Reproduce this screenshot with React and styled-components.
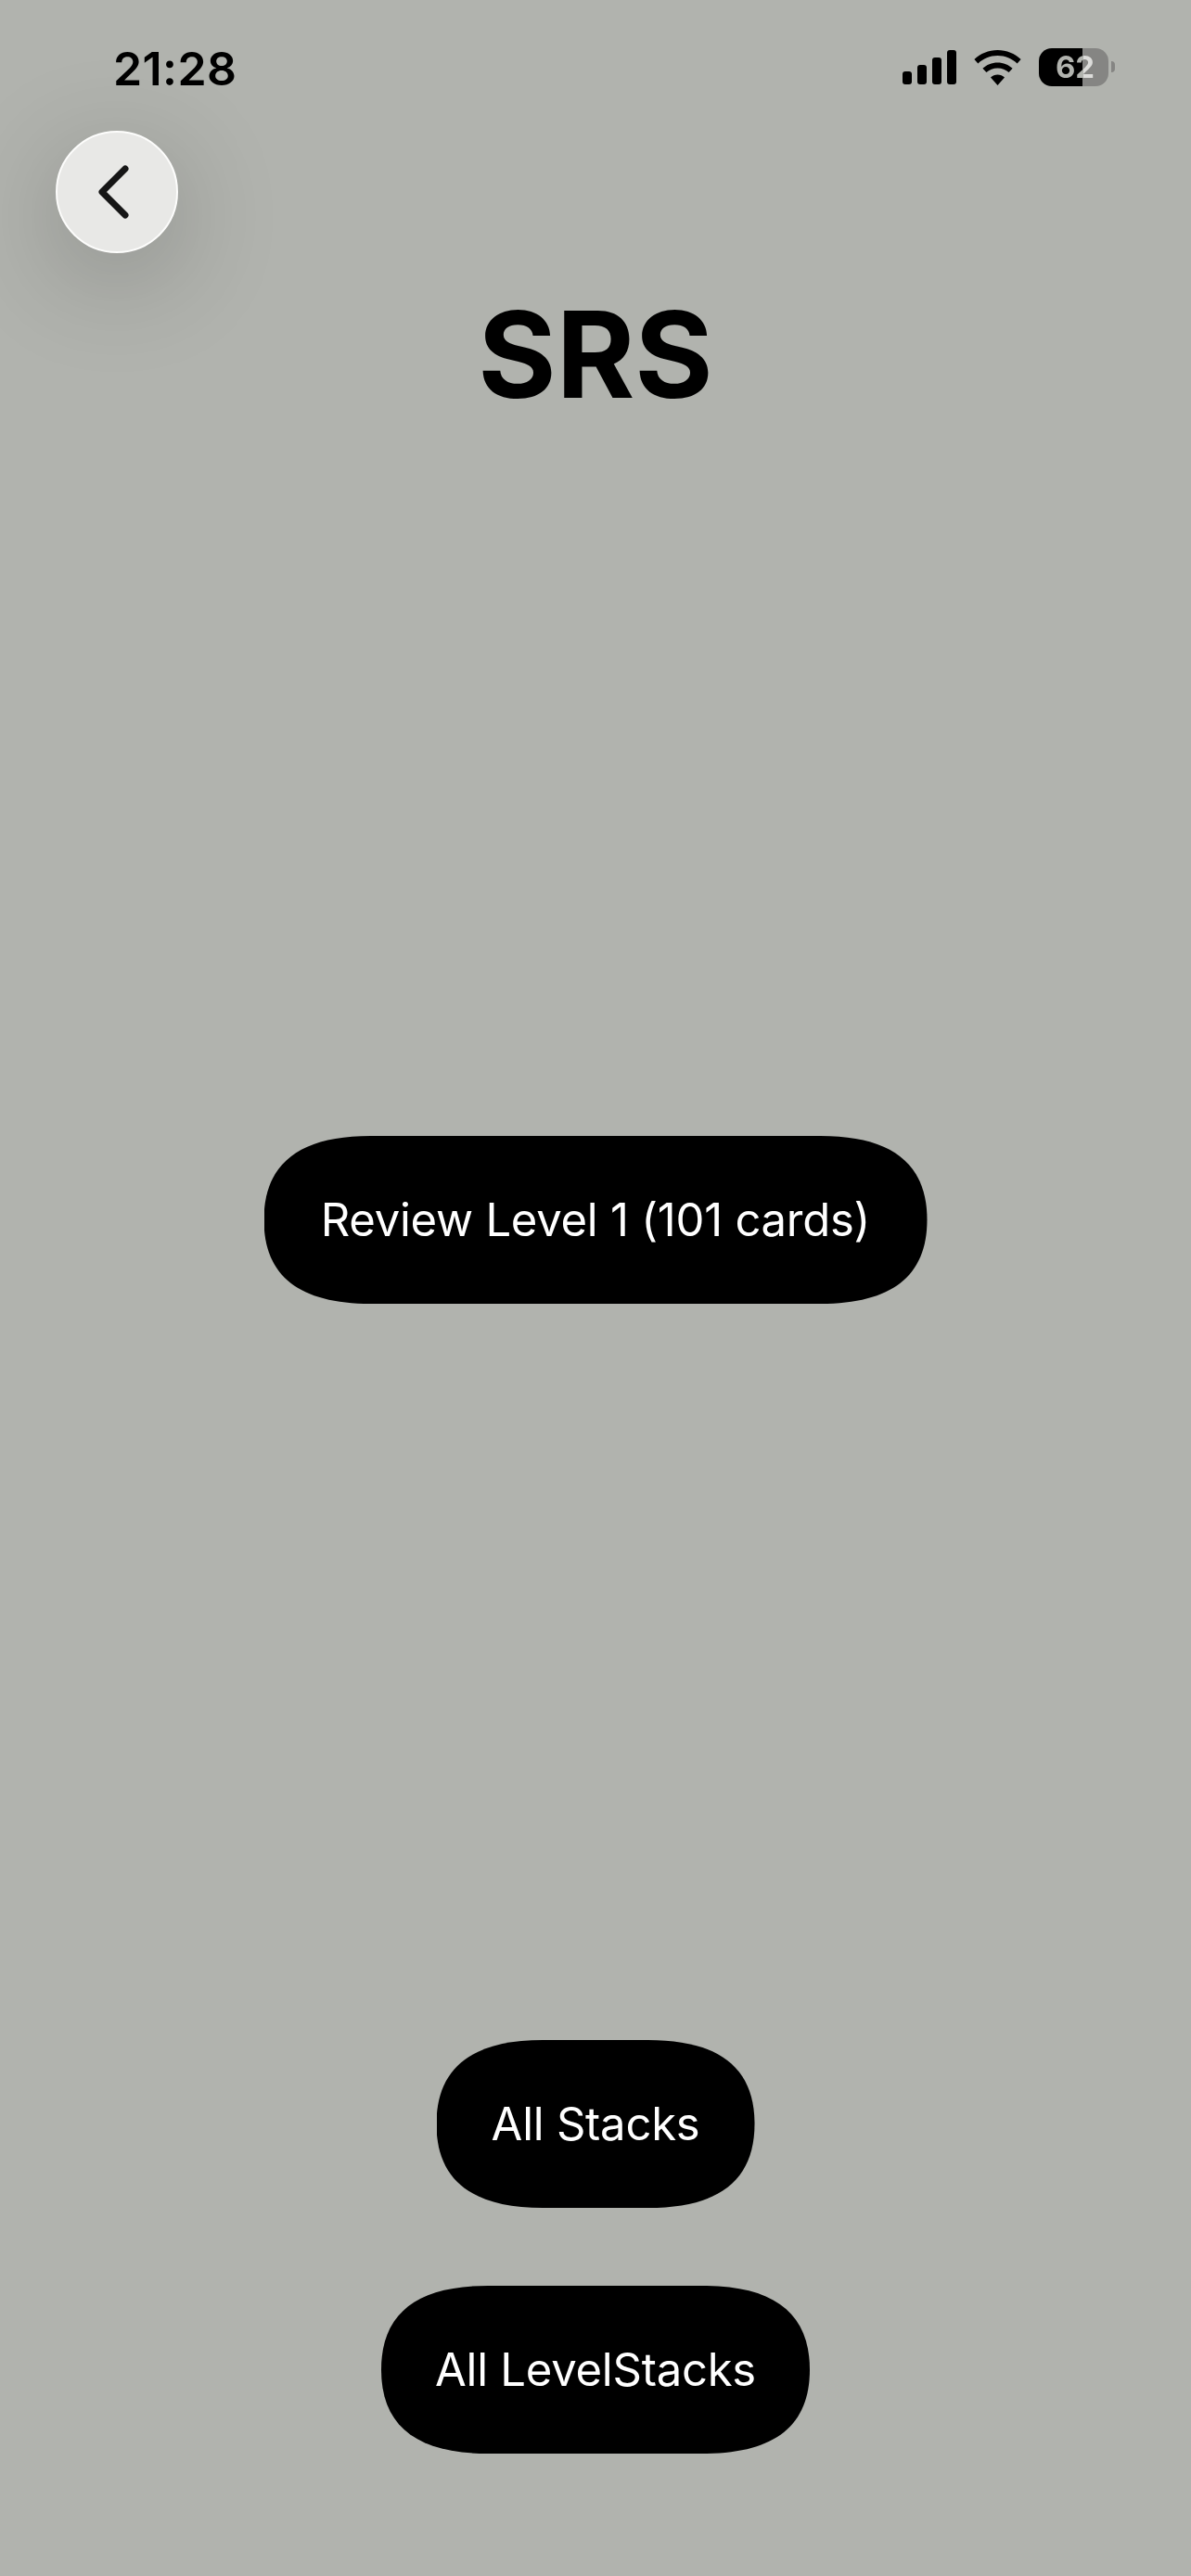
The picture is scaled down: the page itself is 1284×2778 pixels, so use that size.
import React from 'react';
import styled, { createGlobalStyle } from 'styled-components';

const GlobalStyle = createGlobalStyle`
	html,
	body {
		margin: 0;
		padding: 0;
		background-color: #b1b3ae;
	}
`;

// pill with the long soft shoulders of an ios continuous corner, for a 181px tall button
const pillPath = (w, h = 181) => {
	const R = (x) => w - x;
	const B = (y) => h - y;
	return [
		`M115 0 L${R(115)} 0`,
		`C${R(38)} 0 ${w} 30 ${w} 90.5`,
		`C${w} ${B(30)} ${R(38)} ${h} ${R(115)} ${h}`,
		`L115 ${h}`,
		`C38 ${h} 0 ${B(30)} 0 90.5`,
		'C0 30 38 0 115 0',
		'Z',
	].join(' ');
};

const SignalIcon = () => (
	<SignalSvg viewBox="0 0 58 37">
		<rect x="0" y="23" width="10" height="14" rx="3" />
		<rect x="16" y="16" width="10" height="21" rx="3" />
		<rect x="32" y="8" width="10" height="29" rx="3" />
		<rect x="48" y="0" width="10" height="37" rx="3" />
	</SignalSvg>
);

const WifiIcon = () => (
	<WifiSvg viewBox="0 0 51 38">
		<path d="M25.5 0C35.2 0 44 3.8 50.6 10L46.6 14.4C41 9.2 33.6 6 25.5 6S10 9.2 4.4 14.4L.4 10C7 3.8 15.8 0 25.5 0Z" />
		<path d="M25.5 13.4C31.7 13.4 37.4 15.8 41.6 19.8L37.6 24.1C34.4 21.2 30.2 19.4 25.5 19.4S16.6 21.2 13.4 24.1L9.4 19.8C13.6 15.8 19.3 13.4 25.5 13.4Z" />
		<path d="M25.5 26.6C28.4 26.6 31 27.7 33 29.5L25.5 38L18 29.5C20 27.7 22.6 26.6 25.5 26.6Z" />
	</WifiSvg>
);

const App = () => {
	return (
		<Page>
			<GlobalStyle />
			<StatusBar>
				<Time>21:28</Time>
				<StatusIcons>
					<SignalIcon />
					<WifiIcon />
					<Battery>
						<BatteryLevel>62</BatteryLevel>
					</Battery>
				</StatusIcons>
			</StatusBar>
			<BackButton aria-label="Back">
				<svg width="36" height="58" viewBox="0 0 36 58" fill="none">
					<path d="M30 4L5 29L30 54" stroke="#161616" strokeWidth="7" strokeLinecap="round" strokeLinejoin="round" />
				</svg>
			</BackButton>
			<Title>SRS</Title>
			<ReviewArea>
				<PillButton $width={715}>Review Level 1 (101 cards)</PillButton>
			</ReviewArea>
			<Footer>
				<PillButton $width={343}>All Stacks</PillButton>
				<PillButton $width={462}>All LevelStacks</PillButton>
			</Footer>
		</Page>
	);
};

export default App;

const Page = styled.div`
	min-height: 2778px;
	display: flex;
	flex-direction: column;
	background-color: #b1b3ae;
	font-family: Inter, 'Liberation Sans', sans-serif;
	color: #000;
	overflow: hidden;
`;

const StatusBar = styled.div`
	height: 141px;
	box-sizing: border-box;
	padding: 52px 82px 0 122px;
	display: flex;
	justify-content: space-between;
	align-items: flex-start;
`;

const Time = styled.span`
	font-size: 50px;
	font-weight: 600;
	line-height: 44px;
	letter-spacing: 0.4px;
`;

const StatusIcons = styled.div`
	display: flex;
	align-items: center;
	height: 41px;
`;

const SignalSvg = styled.svg`
	width: 58px;
	height: 37px;
	fill: #000;
	margin-right: 19px;
`;

const WifiSvg = styled.svg`
	width: 51px;
	height: 38px;
	fill: #000;
	margin-right: 19px;
`;

const Battery = styled.div`
	position: relative;
	width: 75px;
	height: 41px;
	margin-right: 7px;
	border-radius: 14px;
	display: flex;
	align-items: center;
	justify-content: center;
	background: linear-gradient(90deg, #000 47px, #858583 47px);

	&::after {
		content: '';
		position: absolute;
		top: 14px;
		right: -7px;
		width: 4px;
		height: 12px;
		border-radius: 0 6px 6px 0;
		background-color: #858583;
	}
`;

const BatteryLevel = styled.span`
	width: 43px;
	font-size: 33px;
	font-weight: 700;
	line-height: 41px;
	text-align: center;
	color: transparent;
	background: linear-gradient(90deg, #b1b3ae 30px, #dcdcda 30px);
	-webkit-background-clip: text;
	background-clip: text;
	margin-left: 3px;
`;

const BackButton = styled.button`
	width: 132px;
	height: 132px;
	margin-left: 60px;
	padding: 0 6px 0 0;
	box-sizing: border-box;
	display: flex;
	align-items: center;
	justify-content: center;
	flex-shrink: 0;
	border: 2px solid #fdfdfc;
	border-radius: 50%;
	background-color: #e8e8e6;
	box-shadow: 0 26px 115px rgba(0, 0, 0, 0.22);
`;

const Title = styled.h1`
	margin: 45px 0 0;
	font-size: 129px;
	font-weight: 700;
	line-height: 128px;
	text-align: center;
`;

const ReviewArea = styled.div`
	flex: 1;
	display: flex;
	align-items: center;
	justify-content: center;
`;

const Footer = styled.div`
	padding: 15px 0 132px;
	display: flex;
	flex-direction: column;
	align-items: center;
	gap: 84px;
`;

const PillButton = styled.button`
	width: ${({ $width }) => $width}px;
	height: 181px;
	padding: 0;
	border: 0;
	flex-shrink: 0;
	background-color: #000;
	clip-path: path('${({ $width }) => pillPath($width)}');
	font-family: Inter, 'Liberation Sans', sans-serif;
	font-size: 49px;
	font-weight: 380;
	letter-spacing: -0.25px;
	color: #fff;
	white-space: nowrap;
`;
